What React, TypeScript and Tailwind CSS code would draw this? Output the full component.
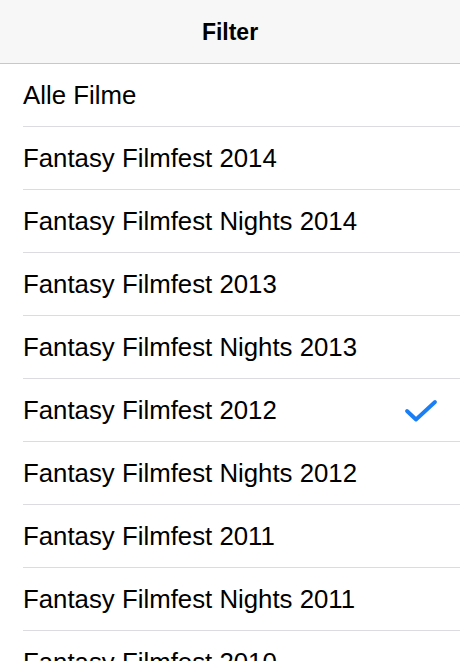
const items = [
  "Alle Filme",
  "Fantasy Filmfest 2014",
  "Fantasy Filmfest Nights 2014",
  "Fantasy Filmfest 2013",
  "Fantasy Filmfest Nights 2013",
  "Fantasy Filmfest 2012",
  "Fantasy Filmfest Nights 2012",
  "Fantasy Filmfest 2011",
  "Fantasy Filmfest Nights 2011",
  "Fantasy Filmfest 2010",
]

const selected = "Fantasy Filmfest 2012"

function Check() {
  return (
    <svg width="36" height="28" viewBox="0 0 36 28" fill="none" className="mt-[4px]">
      <path d="M3 13 L12 21.5 L31 4" stroke="#1a7ef5" strokeWidth="3.8" strokeLinecap="round" strokeLinejoin="round" />
    </svg>
  )
}

export default function App() {
  return (
    <div className="h-[661px] w-[460px] overflow-hidden bg-white font-['Liberation_Sans',Arial,sans-serif] text-black">
      {/* Nav bar */}
      <div className="flex h-[64px] items-center justify-center border-b border-[#c8c7cc] bg-[#f7f7f7] pt-[2px]">
        <span className="text-[23px] font-bold">Filter</span>
      </div>

      {/* List */}
      <ul>
        {items.map((item) => (
          <li key={item} className="pl-[23px]">
            <div className="flex h-[63px] items-center justify-between border-b border-[#dcdce0] pr-[20px]">
              <span className="pt-[2px] text-[25.8px] leading-none">{item}</span>
              {item === selected && <Check />}
            </div>
          </li>
        ))}
      </ul>
    </div>
  )
}
